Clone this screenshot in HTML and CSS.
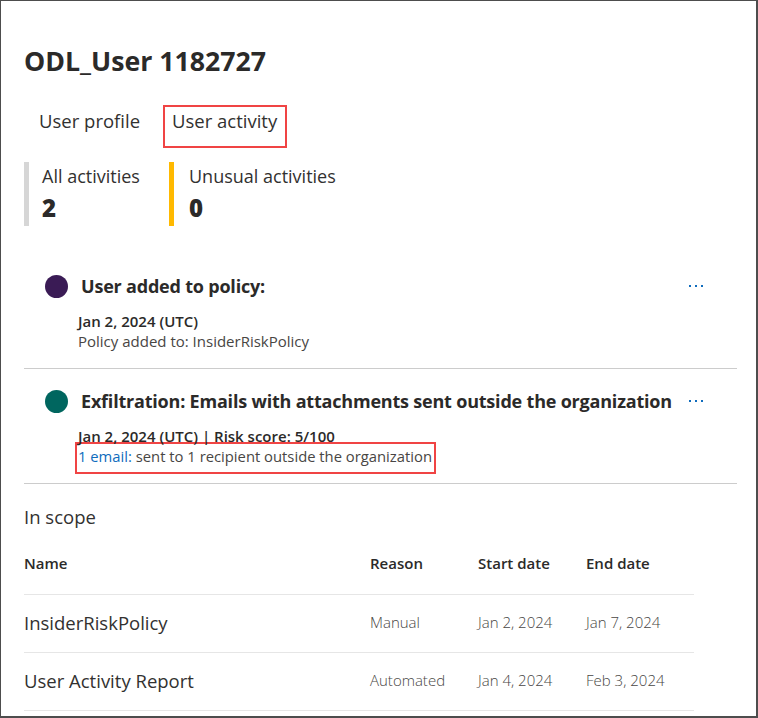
FILE: index.html
```html
<!DOCTYPE html>
<html>
<head>
<meta charset="utf-8">
<link rel="stylesheet" href="styles.css">
</head>
<body>
<div class="frame">
  <h1 class="title">ODL_User 1182727</h1>
  <div class="tabs">
    <div class="tab">User profile</div>
    <div class="tab tab-active">User activity</div>
  </div>
  <div class="stats">
    <div class="stat stat-all">
      <div class="stat-label">All activities</div>
      <div class="stat-value">2</div>
    </div>
    <div class="stat stat-unusual">
      <div class="stat-label">Unusual activities</div>
      <div class="stat-value">0</div>
    </div>
  </div>
  <div class="activities">
    <div class="activity">
      <div class="act-head">
        <span class="dot dot-purple"></span>
        <span class="act-title">User added to policy:</span>
        <span class="more"><i></i><i></i><i></i></span>
      </div>
      <div class="act-body">
        <div class="act-date">Jan 2, 2024 (UTC)</div>
        <div class="act-desc">Policy added to: InsiderRiskPolicy</div>
      </div>
    </div>
    <div class="activity">
      <div class="act-head">
        <span class="dot dot-teal"></span>
        <span class="act-title">Exfiltration: Emails with attachments sent outside the organization</span>
        <span class="more"><i></i><i></i><i></i></span>
      </div>
      <div class="act-body">
        <div class="act-date">Jan 2, 2024 (UTC) | Risk score: 5/100</div>
        <div class="act-desc highlight"><span class="link">1 email:</span> sent to 1 recipient outside the organization</div>
      </div>
    </div>
  </div>
  <h2 class="scope-title">In scope</h2>
  <table class="scope">
    <thead>
      <tr><th class="c-name">Name</th><th class="c-reason">Reason</th><th class="c-start">Start date</th><th class="c-end">End date</th></tr>
    </thead>
    <tbody>
      <tr><td class="c-name">InsiderRiskPolicy</td><td class="c-reason">Manual</td><td>Jan 2, 2024</td><td>Jan 7, 2024</td></tr>
      <tr><td class="c-name">User Activity Report</td><td class="c-reason">Automated</td><td>Jan 4, 2024</td><td>Feb 3, 2024</td></tr>
    </tbody>
  </table>
</div>
</body>
</html>
```
FILE: styles.css
```css
html, body {
  margin: 0;
  padding: 0;
  background: #ffffff;
}
body {
  font-family: "Open Sans", "Noto Sans", sans-serif;
  color: #2b2a29;
}
.frame {
  box-sizing: border-box;
  width: 758px;
  height: 718px;
  overflow: hidden;
  border-top: 1px solid #4d4d4d;
  border-left: 1px solid #4d4d4d;
  border-right: 2px solid #4d4d4d;
  border-bottom: 2px solid #4d4d4d;
  padding: 0 19px 0 23px;
}
.title {
  margin: 42px 0 0 0;
  font-size: 26.7px;
  line-height: 36px;
  font-weight: 700;
  color: #2b2a29;
}
.tabs {
  display: flex;
  align-items: flex-start;
  margin-top: 26px;
}
.tab {
  box-sizing: border-box;
  width: 139px;
  font-size: 18.5px;
  line-height: 24px;
  padding: 4px 0 0 15px;
  color: #323130;
}
.tab-active {
  width: 124px;
  padding: 2px 0 13px 7px;
  border: 2px solid #f04444;
}
.stats {
  display: flex;
  margin-top: 14px;
}
.stat {
  box-sizing: border-box;
  border-left: 5px solid #d6d6d6;
  padding: 2px 0 4px 13px;
}
.stat-all {
  width: 145px;
}
.stat-unusual {
  border-left-color: #ffb900;
  padding-left: 15px;
}
.stat-label {
  font-size: 18px;
  line-height: 24px;
  color: #323130;
}
.stat-value {
  font-size: 24px;
  font-weight: 800;
  line-height: 28px;
  margin-top: 6px;
}
.activities {
  margin-top: 27px;
}
.activity {
  border-bottom: 1px solid #cccccc;
  padding: 19px 0 17px 0;
}
.activity + .activity {
  padding-top: 18px;
}
.act-head {
  display: flex;
  align-items: center;
  padding-left: 21px;
  height: 28px;
}
.dot {
  width: 23px;
  height: 23px;
  border-radius: 50%;
  flex: none;
}
.dot-purple { background: #3a1b55; }
.dot-teal { background: #00665f; }
.act-title {
  font-size: 18px;
  font-weight: 700;
  margin-left: 13px;
  flex: 1;
  white-space: nowrap;
  letter-spacing: -0.2px;
}
.more {
  display: flex;
  gap: 4px;
  padding-right: 34px;
}
.more i {
  width: 2px;
  height: 2px;
  background: #0f6cbd;
}
.act-body {
  padding-left: 54px;
  margin-top: 11px;
}
.act-date {
  font-size: 15px;
  font-weight: 600;
  line-height: 20px;
}
.act-desc {
  font-size: 15px;
  line-height: 20px;
  color: #484644;
}
.highlight {
  width: fit-content;
  font-size: 14.8px;
  margin: -4px 0 -8px -3px;
  padding: 2px 2px 6px 1px;
  border: 2px solid #f04444;
}
.link { color: #0f6cbd; }
.scope-title {
  margin: 21px 0 0 0;
  font-size: 18.5px;
  font-weight: 400;
  line-height: 24px;
  color: #323130;
}
.scope {
  border-collapse: collapse;
  margin-top: 6px;
  width: 670px;
}
.scope th, .scope td {
  text-align: left;
  padding: 0;
  border-bottom: 1px solid #e6e6e6;
  vertical-align: middle;
}
.scope th {
  font-size: 15px;
  font-weight: 600;
  height: 55px;
  padding-bottom: 4px;
}
.scope td {
  font-size: 15px;
  font-weight: 300;
  color: #484644;
  height: 54px;
  padding-bottom: 3px;
}
.scope td.c-name {
  font-size: 18.5px;
  font-weight: 400;
  color: #323130;
}
.c-name { width: 346px; }
.c-reason { width: 108px; }
.c-start { width: 108px; }
```
